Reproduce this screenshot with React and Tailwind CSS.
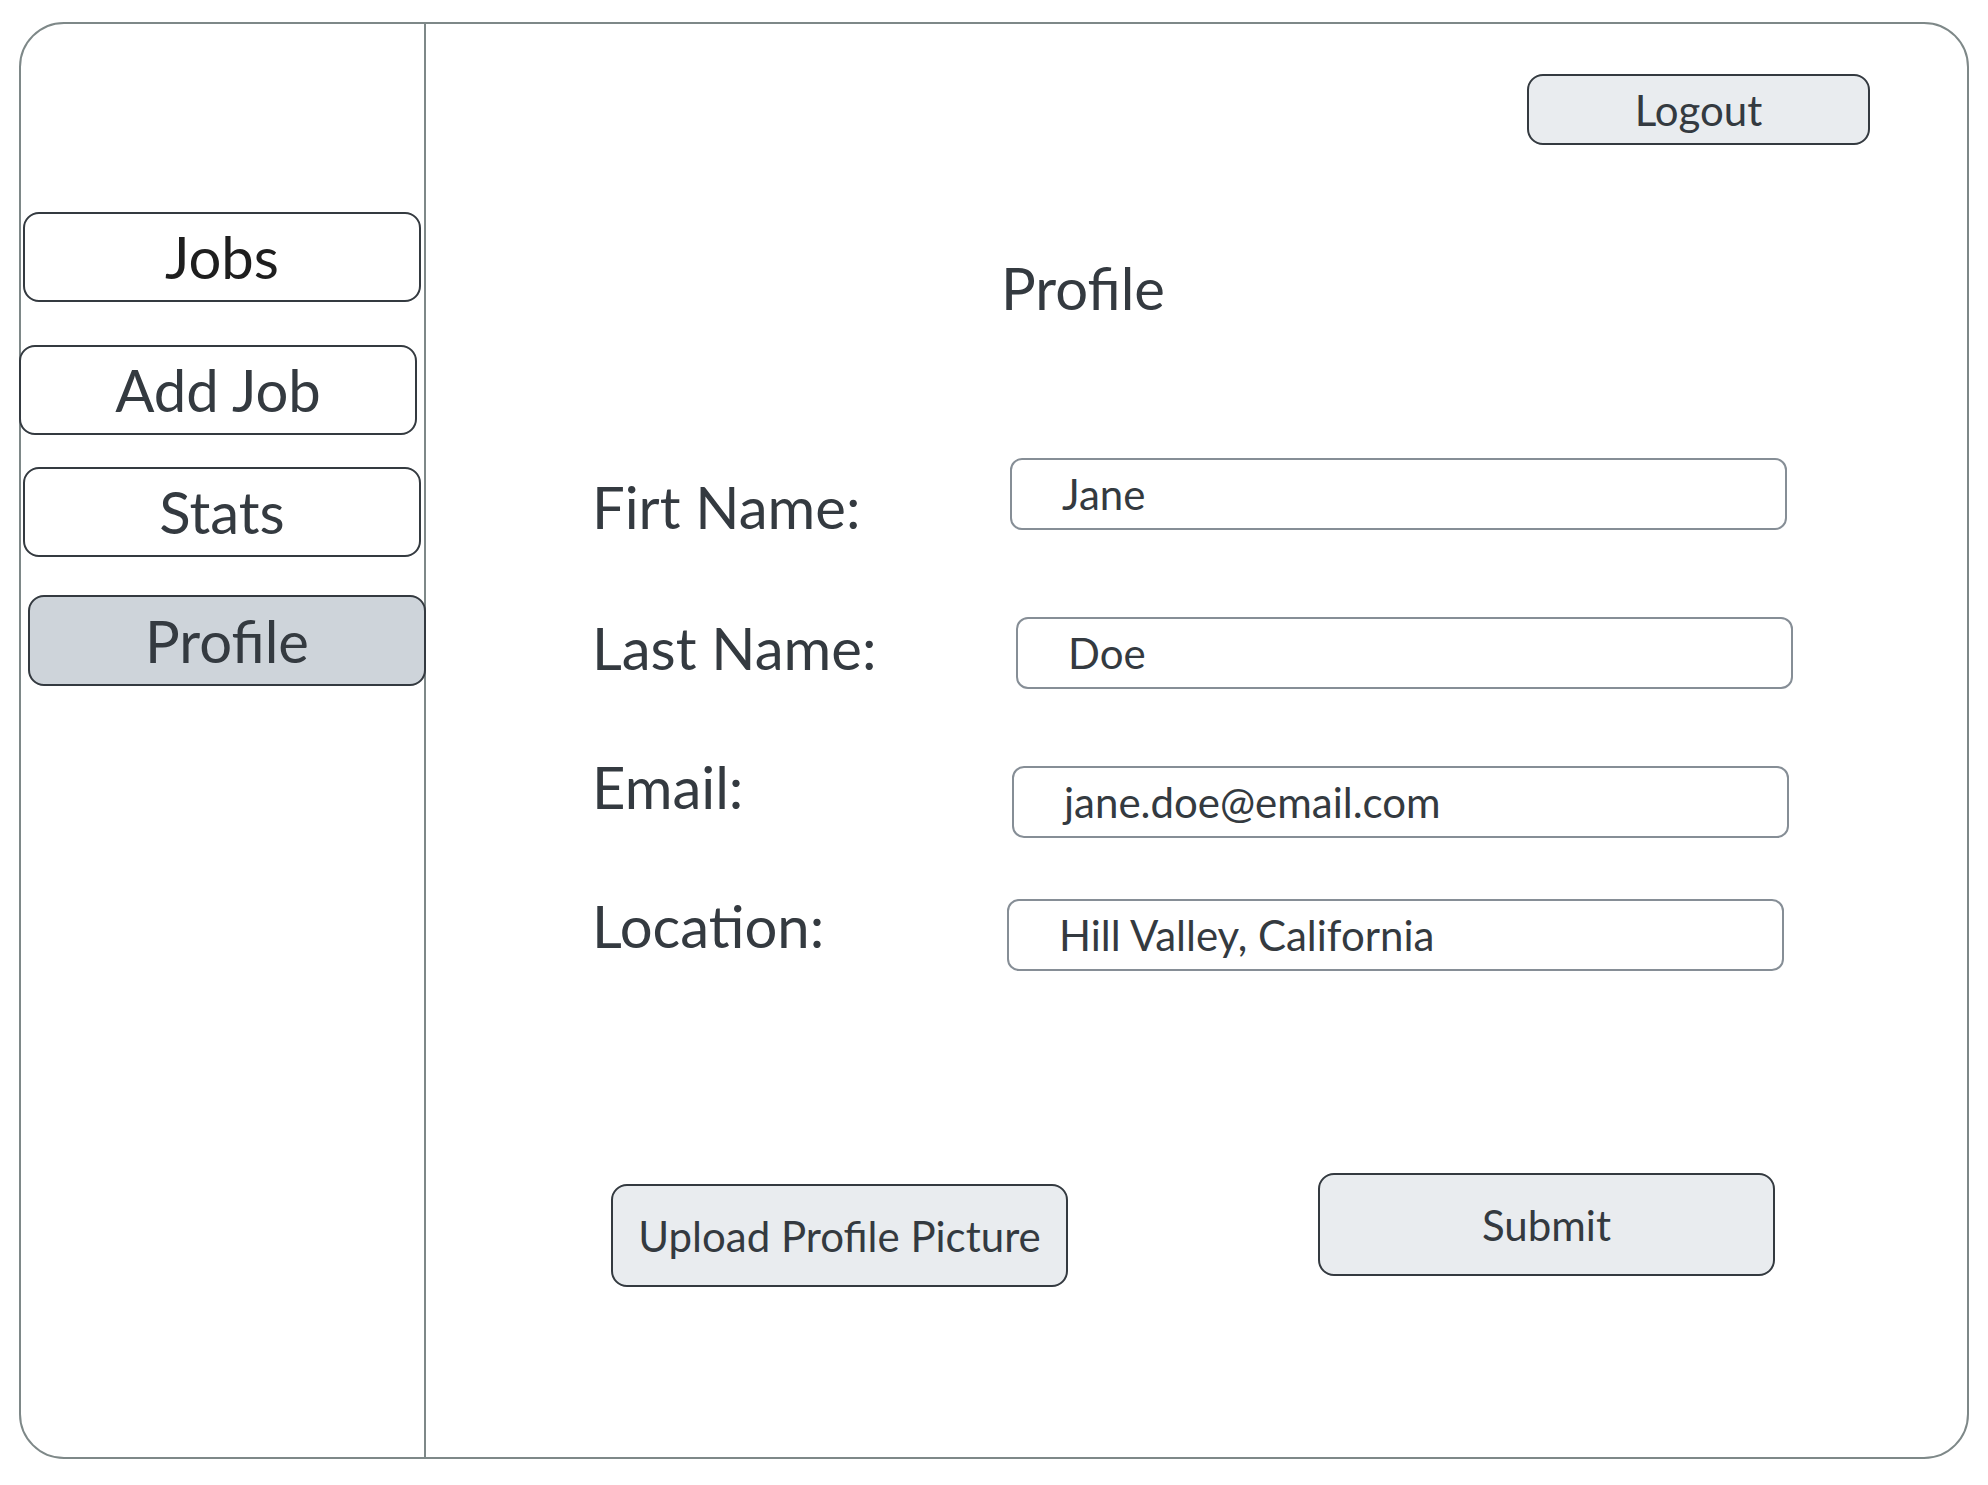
export default function App() {
  const navBtn =
    "h-[90px] w-[398px] flex items-center justify-center rounded-[16px] border-2 border-[#343a40] text-[58px] leading-none";
  const input =
    "h-[72px] w-[777px] shrink-0 flex items-center pl-[50px] rounded-[12px] border-2 border-[#868e96] text-[42px] leading-none";
  const label = "w-[418px] shrink-0 text-[58px] leading-[72px]";
  const row = "flex items-start h-[72px] ml-[166px]";
  const btn =
    "flex items-center justify-center rounded-[16px] border-2 border-[#343a40] bg-[#e9ecef] text-[42px] leading-none";
  return (
    <div className="w-[1988px] h-[1485px] bg-white font-['Lato',sans-serif] text-[#343a40] pt-[22px] pl-[19px]">
      <div className="w-[1950px] h-[1437px] border-2 border-[#7e8888] rounded-[45px] flex">
        <aside className="w-[405px] shrink-0 border-r-2 border-[#7e8888] flex flex-col">
          <div className={`${navBtn} mt-[188px] ml-[2px] text-[#1e1e1e]`}>Jobs</div>
          <div className={`${navBtn} mt-[43px] ml-[-2px]`}>Add Job</div>
          <div className={`${navBtn} mt-[32px] ml-[2px]`}>Stats</div>
          <div className={`${navBtn} mt-[38px] ml-[7px] h-[91px] bg-[#ced4da]`}>Profile</div>
        </aside>
        <main className="flex-1 flex flex-col">
          <div className="flex justify-end pt-[50px] pr-[97px]">
            <div className={`${btn} w-[343px] h-[71px]`}>Logout</div>
          </div>
          <h1 className="mt-[110px] ml-[575px] text-[58px] leading-[65px]">Profile</h1>
          <div className={`${row} mt-[138px]`}>
            <span className={`${label} mt-[13px]`}>Firt Name:</span>
            <div className={input}>Jane</div>
          </div>
          <div className={`${row} mt-[87px]`}>
            <span className={`${label} mt-[-5px]`}>Last Name:</span>
            <div className={`${input} ml-[6px] w-[776px]`}>Doe</div>
          </div>
          <div className={`${row} mt-[77px]`}>
            <span className={`${label} mt-[-15px]`}>Email:</span>
            <div className={`${input} ml-[2px]`}>jane.doe@email.com</div>
          </div>
          <div className={`${row} mt-[61px]`}>
            <span className={`${label} mt-[-9px]`}>Location:</span>
            <div className={`${input} ml-[-3px] w-[776px]`}>Hill Valley, California</div>
          </div>
          <div className="flex items-start mt-[202px] ml-[185px] gap-[250px]">
            <div className={`${btn} w-[457px] h-[103px] mt-[11px]`}>Upload Profile Picture</div>
            <div className={`${btn} w-[457px] h-[103px]`}>Submit</div>
          </div>
        </main>
      </div>
    </div>
  );
}
